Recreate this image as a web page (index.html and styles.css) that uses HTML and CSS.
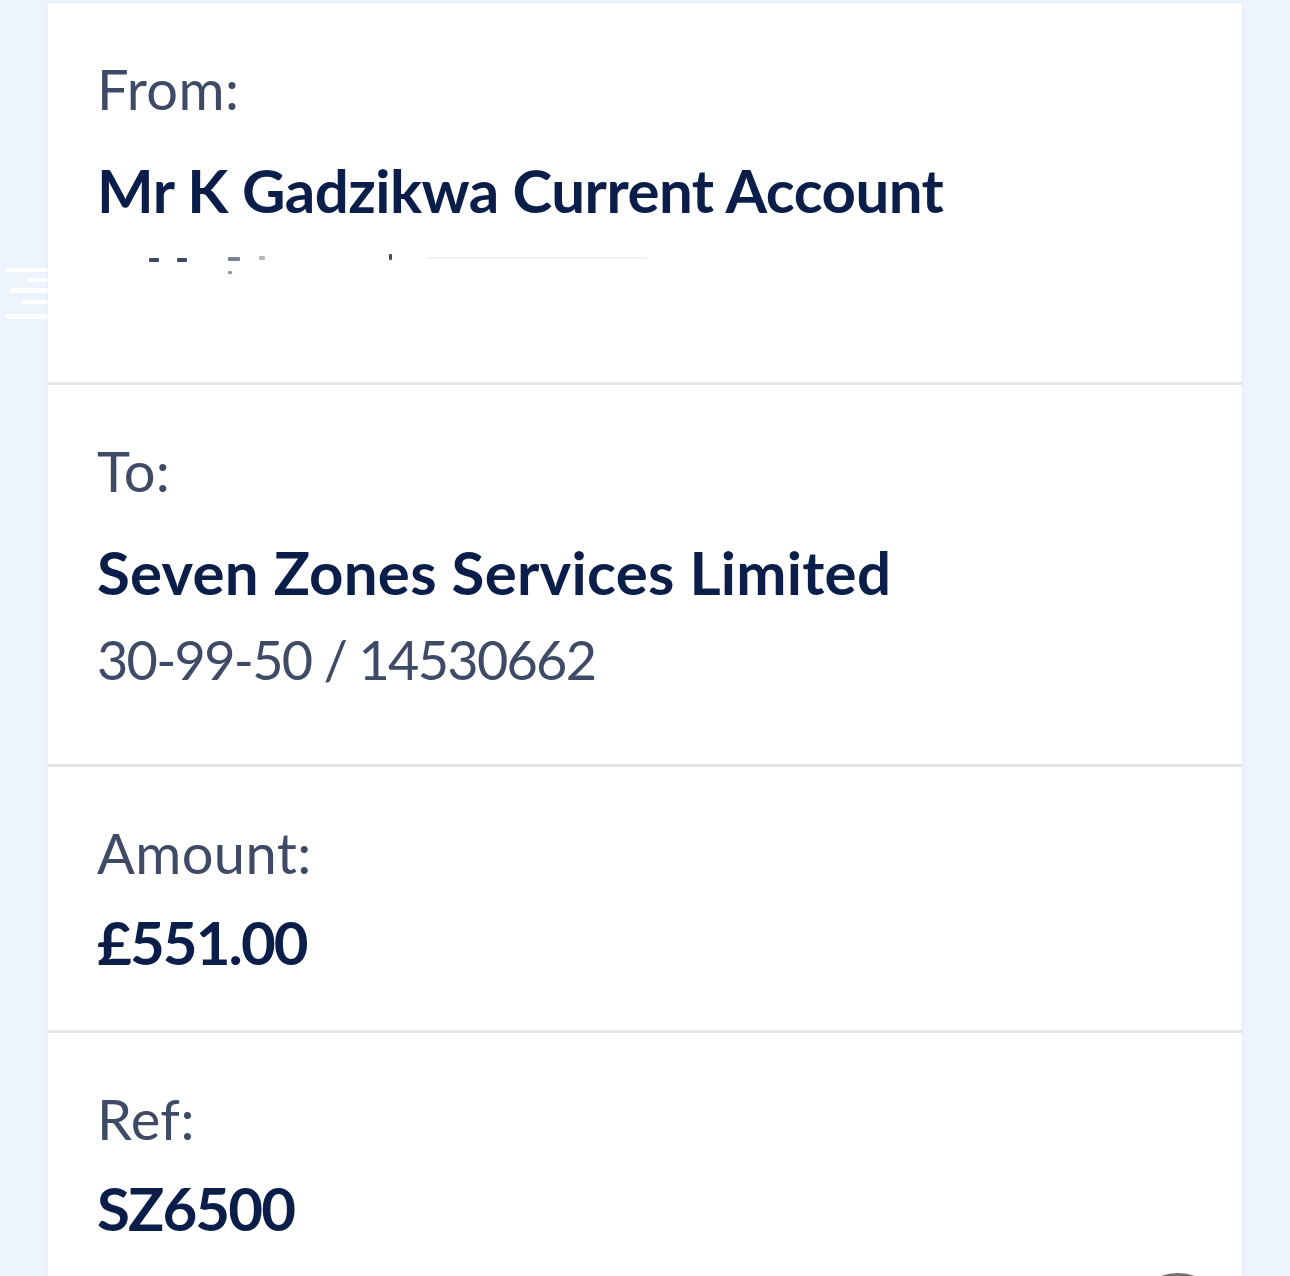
FILE: index.html
```html
<!DOCTYPE html>
<html lang="en">
<head>
<meta charset="utf-8">
<title>Payment details</title>
<link rel="stylesheet" href="styles.css">
</head>
<body>
<div class="page">
  <div class="smudges" aria-hidden="true">
    <span class="smudge s1"></span>
    <span class="smudge s2"></span>
    <span class="smudge s3"></span>
    <span class="smudge s4"></span>
    <span class="smudge s5"></span>
  </div>
  <main class="card">
    <section class="row">
      <div class="label">From:</div>
      <div class="value">Mr K Gadzikwa Current Account</div>
      <div class="sub redacted" aria-hidden="true">
        <span class="mark m1"></span>
        <span class="mark m2"></span>
        <span class="mark m3"></span>
        <span class="mark m4"></span>
        <span class="mark m5"></span>
        <span class="mark m6"></span>
        <span class="mark m7"></span>
      </div>
    </section>
    <section class="row">
      <div class="label">To:</div>
      <div class="value value-wide">Seven Zones Services Limited</div>
      <div class="sub num">30-99-50 / 14530662</div>
    </section>
    <section class="row row-short">
      <div class="label">Amount:</div>
      <div class="value num">£551.00</div>
    </section>
    <section class="row row-short row-last">
      <div class="label">Ref:</div>
      <div class="value num">SZ6500</div>
    </section>
    <div class="fab" aria-hidden="true"></div>
  </main>
</div>
</body>
</html>
```

FILE: styles.css
```css
html, body {
  margin: 0;
  padding: 0;
  height: 1276px;
  overflow: hidden;
  background: #edf4fe;
}

.page {
  position: relative;
  padding-top: 3px;
  font-family: Lato, "Noto Sans", "Liberation Sans", sans-serif;
}

.card {
  position: relative;
  margin-left: 48px;
  width: 1194px;
  height: 1273px;
  background: #ffffff;
  box-shadow: 0 0 5px rgba(20, 40, 80, 0.05);
  overflow: hidden;
}

.row {
  padding: 52px 49px 71px 49px;
  border-bottom: 3px solid #e4e5e9;
}

.row-short {
  padding-bottom: 52px;
}

.row-last {
  border-bottom: none;
}

.label {
  font-size: 56px;
  line-height: 68px;
  color: #3f4a66;
  font-weight: 400;
  letter-spacing: 0.4px;
}

.value {
  margin-top: 31px;
  font-size: 60px;
  line-height: 72px;
  font-weight: 700;
  color: #0b1e4a;
  letter-spacing: -0.55px;
}

.value-wide {
  letter-spacing: 0.25px;
}

.row-short .value {
  margin-top: 19px;
}

.sub {
  margin-top: 19px;
  font-size: 54px;
  line-height: 66px;
  color: #3f4a66;
}

.value.num {
  letter-spacing: -1.9px;
}

.sub.num {
  letter-spacing: -1.7px;
}

.redacted {
  position: relative;
  height: 66px;
}

.mark {
  position: absolute;
  height: 4px;
  background: #3f4a66;
  border-radius: 1px;
}
.m1 { left: 52px; top: 13px; width: 10px; }
.m2 { left: 80px; top: 13px; width: 10px; }
.m3 { left: 131px; top: 12px; width: 12px; opacity: 0.7; }
.m4 { left: 162px; top: 11px; width: 6px; opacity: 0.4; }
.m5 { left: 292px; top: 9px; width: 3px; height: 6px; }
.m6 { left: 131px; top: 26px; width: 4px; height: 3px; opacity: 0.6; }
.m7 { left: 330px; top: 12px; width: 220px; height: 2px; opacity: 0.08; }

.smudges {
  position: absolute;
  left: 0;
  top: 262px;
  width: 48px;
  height: 64px;
}

.smudge {
  position: absolute;
  right: 0;
  height: 4px;
  background: #ffffff;
  border-radius: 2px;
}
.s1 { top: 6px; width: 42px; }
.s2 { top: 16px; width: 20px; }
.s3 { top: 26px; width: 38px; height: 5px; }
.s4 { top: 38px; width: 26px; }
.s5 { top: 52px; width: 42px; height: 5px; }

.fab {
  position: absolute;
  left: 1080px;
  top: 1270px;
  width: 100px;
  height: 100px;
  border-radius: 50%;
  background: #6f6f72;
}
```
